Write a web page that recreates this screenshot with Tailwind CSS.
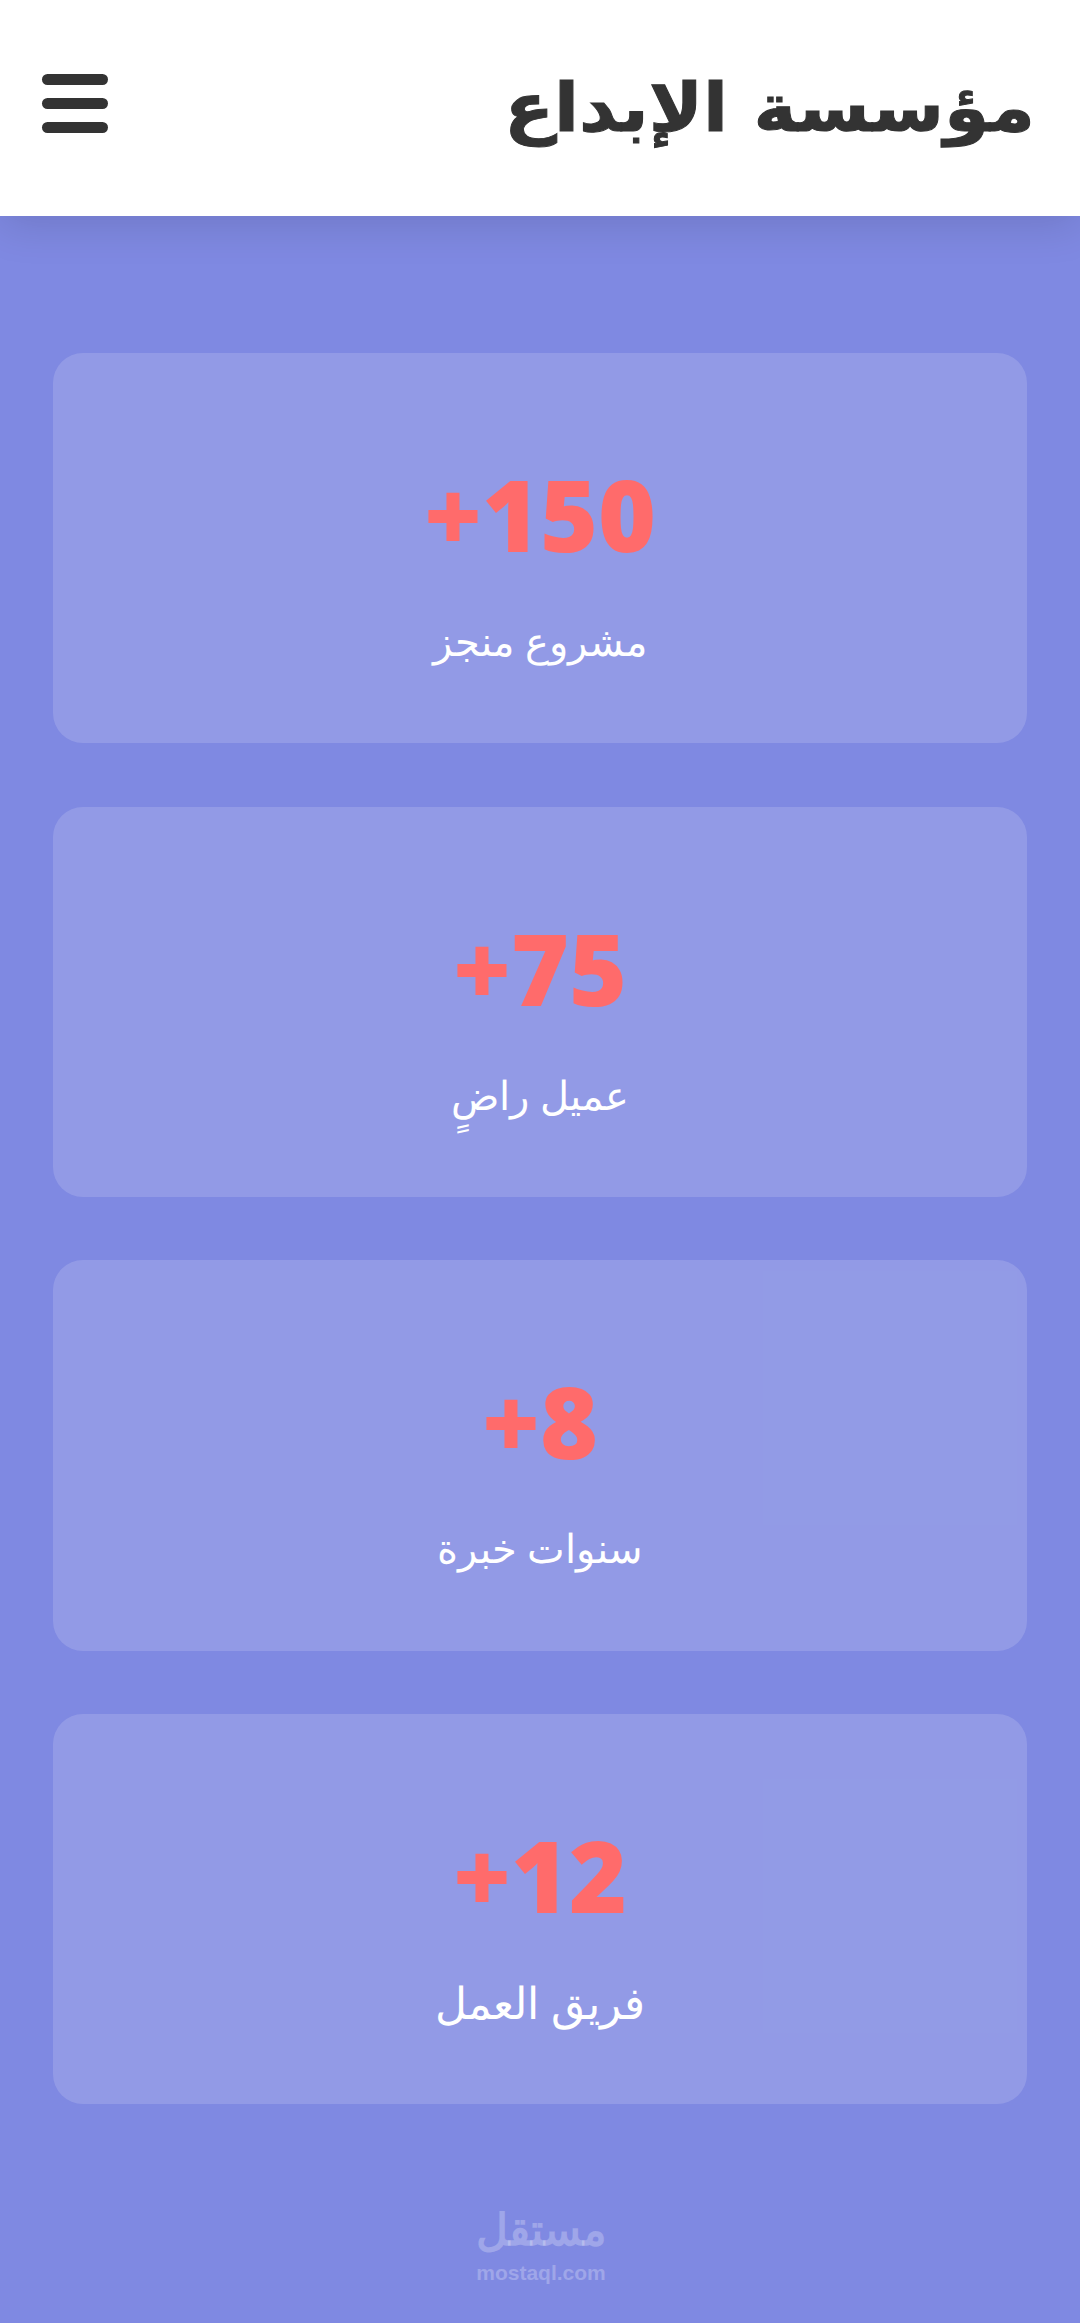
<!DOCTYPE html>
<html lang="ar" dir="rtl">
<head>
    <meta charset="utf-8">
    <title>مؤسسة الإبداع</title>
    <script src="https://cdn.jsdelivr.net/npm/@tailwindcss/browser@4"></script>
</head>
<body class="bg-[#7f89e2] font-['Open_Sans','Noto_Sans',sans-serif]">
<div class="flex flex-col h-[2323px] overflow-hidden relative">
    <!-- header -->
    <header class="h-[216px] bg-white flex justify-between pr-[45px] pl-[42px] pt-[74px] shadow-[0_10px_40px_rgba(0,0,0,0.12)] relative">
        <h1 class="text-[67px] leading-[88px] -mt-[10px] font-bold text-[#333333] font-['DejaVu_Sans',sans-serif] origin-right scale-x-[1.09] [-webkit-text-stroke:1px_#333333]">مؤسسة الإبداع</h1>
        <div class="flex flex-col gap-[13px] w-[66px]">
            <span class="h-[11px] rounded-full bg-[#333333]"></span>
            <span class="h-[11px] rounded-full bg-[#333333]"></span>
            <span class="h-[11px] rounded-full bg-[#333333]"></span>
        </div>
    </header>

    <!-- stats -->
    <main class="flex flex-col gap-[63.37px] px-[53px] pt-[137px]">
        <div class="h-[390.3px] rounded-[30px] bg-white/15 flex flex-col items-center pt-[101px]">
            <div class="text-[99px] leading-[120px] font-extrabold text-[#ff6b6b]">150+</div>
            <div class="text-[40px] leading-[54px] mt-[40px] text-white">مشروع منجز</div>
        </div>
        <div class="h-[390.3px] rounded-[30px] bg-white/15 flex flex-col items-center pt-[101px]">
            <div class="text-[99px] leading-[120px] font-extrabold text-[#ff6b6b]">75+</div>
            <div class="text-[40px] leading-[54px] mt-[40px] text-white">عميل راضٍ</div>
        </div>
        <div class="h-[390.3px] rounded-[30px] bg-white/15 flex flex-col items-center pt-[101px]">
            <div class="text-[99px] leading-[120px] font-extrabold text-[#ff6b6b]">8+</div>
            <div class="text-[40px] leading-[54px] mt-[40px] text-white">سنوات خبرة</div>
        </div>
        <div class="h-[390.3px] rounded-[30px] bg-white/15 flex flex-col items-center pt-[101px]">
            <div class="text-[99px] leading-[120px] font-extrabold text-[#ff6b6b]">12+</div>
            <div class="text-[44px] leading-[54px] mt-[40px] text-white">فريق العمل</div>
        </div>
    </main>

    <!-- watermark -->
    <div class="absolute left-[474px] top-[2198px] w-[134px] flex flex-col items-center gap-[4px] text-white/25">
        <span class="text-[44px] leading-[60px] font-bold">مستقل</span>
        <span dir="ltr" class="text-[21px] leading-[22px] font-['Liberation_Sans',sans-serif] font-bold">mostaql.com</span>
    </div>
</div>
</body>
</html>
